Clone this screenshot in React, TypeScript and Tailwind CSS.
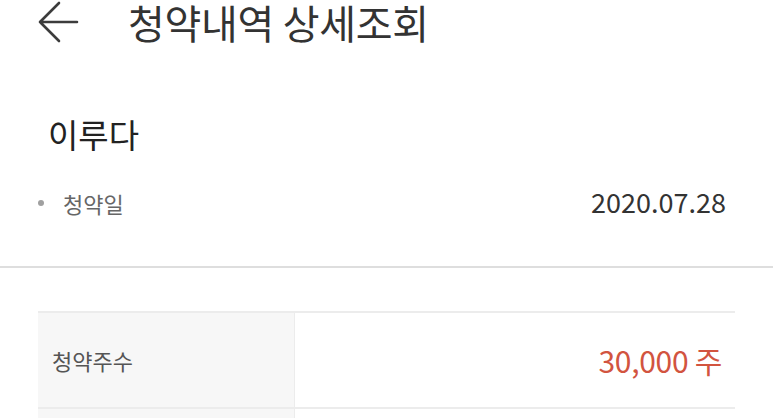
import React from 'react';

const font = { fontFamily: '"Noto Sans CJK KR", "Noto Sans", sans-serif' };

function BackArrow() {
  return (
    <svg width="42" height="44" viewBox="0 0 42 44" fill="none" className="text-[#3c3c3c]">
      <path d="M40 22H3M22 3L3 22l19 19" stroke="currentColor" strokeWidth="2.6" strokeLinecap="round" strokeLinejoin="round" />
    </svg>
  );
}

export default function App() {
  return (
    <div className="w-[773px] h-[418px] overflow-hidden bg-white" style={font}>
      <header className="h-[44px] flex items-center pl-[37px]">
        <BackArrow />
        <h1 className="ml-[49px] text-[40px] leading-[44px] text-[#333] font-normal tracking-[-0.3px] whitespace-nowrap">청약내역 상세조회</h1>
      </header>

      <section className="px-[48px] pr-[47px]">
        <h2 className="mt-[70px] text-[33px] leading-[40px] text-[#222] font-normal">이루다</h2>
        <div className="mt-[34px] flex items-center justify-between -ml-[10px]">
          <div className="flex items-center">
            <span className="w-[6px] h-[6px] rounded-full bg-[#a0a0a0]" />
            <span className="ml-[19px] text-[22px] leading-[30px] text-[#666]">청약일</span>
          </div>
          <span className="text-[27px] leading-[30px] text-[#333] -mt-[2px]">2020.07.28</span>
        </div>
      </section>

      <div className="mt-[48px] h-[2px] bg-[#dedede]" />

      <div className="mt-[43px] ml-[38px] w-[697px]">
        <div className="flex h-[96px] border-t-2 border-[#ececec]">
          <div className="w-[257px] bg-[#f7f7f7] border-r border-[#ececec] flex items-center pl-[14px]">
            <span className="text-[22px] text-[#555]">청약주수</span>
          </div>
          <div className="flex-1 flex items-center justify-end pr-[13px]">
            <span className="text-[30px] text-[#d2543f] tracking-[-0.3px]">30,000 주</span>
          </div>
        </div>
        <div className="flex h-[40px] border-t-2 border-[#ececec]">
          <div className="w-[257px] bg-[#f7f7f7] border-r border-[#ececec]" />
          <div className="flex-1" />
        </div>
      </div>
    </div>
  );
}
